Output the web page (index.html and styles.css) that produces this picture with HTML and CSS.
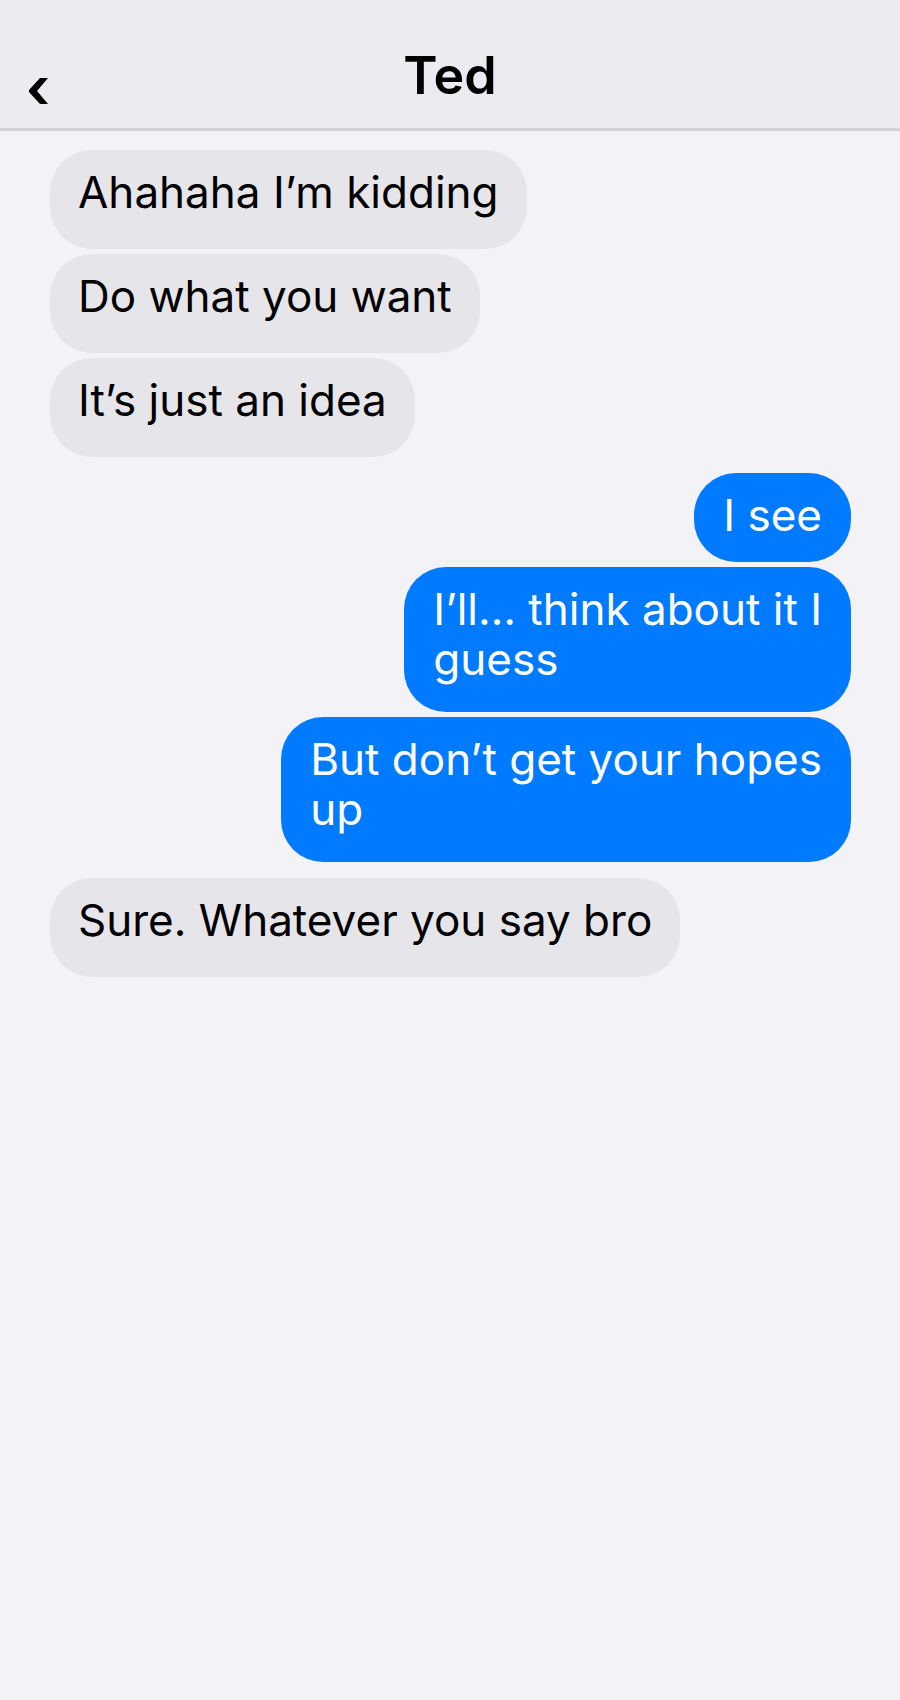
FILE: index.html
```html
<!DOCTYPE html>
<html lang="en">
<head>
<meta charset="utf-8">
<meta name="viewport" content="width=device-width, initial-scale=1">
<title>Ted</title>
<link rel="stylesheet" href="styles.css">
</head>
<body>
<header class="bar">
  <button class="back" type="button" aria-label="Back"><svg class="back-icon" viewBox="0 0 20 28" aria-hidden="true"><path d="M12 1H20L9 14L20 27H12L1 15V13Z"/></svg></button>
  <h1 class="name">Ted</h1>
</header>
<main class="thread">
  <section class="group received">
    <p class="bubble">Ahahaha I’m kidding</p>
    <p class="bubble">Do what you want</p>
    <p class="bubble">It’s just an idea</p>
  </section>
  <section class="group sent">
    <p class="bubble short">I see</p>
    <p class="bubble">I’ll… think about it I<br>guess</p>
    <p class="bubble">But don’t get your hopes<br>up</p>
  </section>
  <section class="group received">
    <p class="bubble">Sure. Whatever you say bro</p>
  </section>
</main>
</body>
</html>
```
FILE: styles.css
```css
* { box-sizing: border-box; }
body {
  margin: 0;
  min-height: 100vh;
  background: #f2f2f7;
  color: #000;
  font-family: Inter, "Liberation Sans", sans-serif;
}
.bar {
  display: grid;
  grid-template-columns: 1fr auto 1fr;
  padding: 45px 28px 21px;
  background: #ebebf0;
  border-bottom: 3px solid #d1d1d6;
}
.back {
  justify-self: start;
  align-self: end;
  padding: 0 0 2px;
  border: 0;
  background: none;
  line-height: 0;
}
.back-icon { width: 20px; height: 28px; }
.name {
  margin: 0;
  font-size: 52px;
  line-height: 62px;
  font-weight: 600;
}
.thread {
  display: flex;
  flex-direction: column;
  gap: 16px;
  padding: 19px 49px 50px 50px;
}
.group {
  display: flex;
  flex-direction: column;
  align-items: flex-start;
  gap: 5px;
}
.sent { align-items: flex-end; }
.bubble {
  margin: 0;
  padding: 17px 28px 32px;
  border-radius: 42px;
  background: #e5e5ea;
  font-size: 44px;
  line-height: 50px;
}
.sent .bubble {
  padding: 17px 29px 28px;
  background: #007aff;
  color: #fff;
}
.sent .short { padding-bottom: 22px; }
```
